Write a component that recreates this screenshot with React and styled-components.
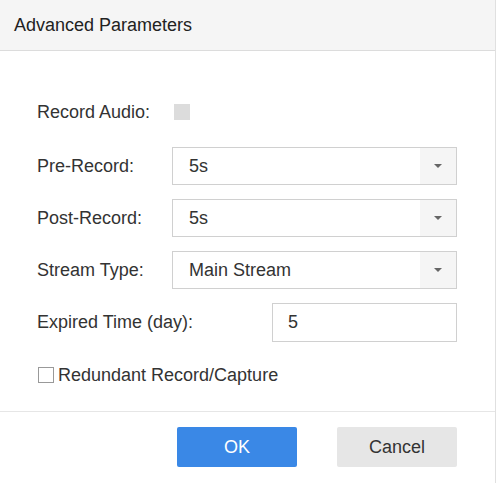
import React from 'react'
import styled, { createGlobalStyle } from 'styled-components';

const Global = createGlobalStyle`
  html, body {
    margin: 0;
    padding: 0;
    background: #fff;
  }
  body {
    font-family: "Liberation Sans", Arial, sans-serif;
  }
`

const rows = [
  { label: 'Pre-Record:', value: '5s' },
  { label: 'Post-Record:', value: '5s' },
  { label: 'Stream Type:', value: 'Main Stream' },
]

const App = () => {
  return (
    <>
      <Global />
      <Dialog>
        <Header>Advanced Parameters</Header>
        <Body>
          <Row $first>
            <Label>Record Audio:</Label>
            <GrayBox />
          </Row>
          {rows.map((r) => (
            <Row key={r.label}>
              <Label>{r.label}</Label>
              <Select>
                <SelectValue>{r.value}</SelectValue>
                <Arrow><Caret /></Arrow>
              </Select>
            </Row>
          ))}
          <Row>
            <Label $wide>Expired Time (day):</Label>
            <Input>5</Input>
          </Row>
          <CheckRow>
            <CheckBox />
            <span>Redundant Record/Capture</span>
          </CheckRow>
        </Body>
        <Footer>
          <Button $primary>OK</Button>
          <Button>Cancel</Button>
        </Footer>
      </Dialog>
    </>
  )
};

const Dialog = styled.div`
  width: 496px;
  height: 483px;
  box-sizing: border-box;
  border-right: 1px solid #e0e0e0;
  background: #fff;
  display: flex;
  flex-direction: column;
  font-size: 18px;
  color: #333;
`

const Header = styled.div`
  height: 50px;
  flex-shrink: 0;
  background: #f5f5f5;
  border-bottom: 1px solid #dcdcdc;
  display: flex;
  align-items: center;
  padding-left: 14px;
  color: #222;
`

const Body = styled.div`
  flex: 1;
  padding: 42px 0 0 37px;
  display: flex;
  flex-direction: column;
  gap: 14px;
`

const Row = styled.div`
  display: flex;
  align-items: center;
  height: 38px;
  margin-bottom: ${(p) => (p.$first ? '2px' : '0')};
`

const Label = styled.div`
  width: ${(p) => (p.$wide ? '235px' : '135px')};
  flex-shrink: 0;
`

const GrayBox = styled.div`
  width: 16px;
  height: 16px;
  margin-left: 2px;
  background: #dcdcdc;
`

const Select = styled.div`
  width: 285px;
  height: 38px;
  box-sizing: border-box;
  border: 1px solid #d0d0d0;
  display: flex;
  align-items: stretch;
`

const SelectValue = styled.div`
  flex: 1;
  display: flex;
  align-items: center;
  padding-left: 16px;
`

const Arrow = styled.div`
  width: 36px;
  background: #f5f5f5;
  display: flex;
  align-items: center;
  justify-content: center;
`

const Caret = styled.span`
  width: 0;
  height: 0;
  border-left: 4px solid transparent;
  border-right: 4px solid transparent;
  border-top: 4px solid #666;
`

const Input = styled.div`
  width: 185px;
  height: 39px;
  box-sizing: border-box;
  border: 1px solid #d0d0d0;
  display: flex;
  align-items: center;
  padding-left: 15px;
`

const CheckRow = styled.div`
  display: flex;
  align-items: center;
  gap: 4px;
  height: 16px;
  margin-top: 12px;
  margin-left: 1px;
`

const CheckBox = styled.div`
  width: 16px;
  height: 16px;
  box-sizing: border-box;
  border: 1px solid #999;
  background: #fff;
`

const Footer = styled.div`
  height: 72px;
  flex-shrink: 0;
  box-sizing: border-box;
  border-top: 1px solid #e6e6e6;
  display: flex;
  justify-content: flex-end;
  align-items: flex-start;
  gap: 40px;
  padding: 15px 38px 0 0;
`

const Button = styled.button`
  width: 120px;
  height: 40px;
  border: none;
  border-radius: 2px;
  font-family: inherit;
  font-size: 18px;
  background: ${(p) => (p.$primary ? '#3a88e6' : '#e6e6e6')};
  color: ${(p) => (p.$primary ? '#fff' : '#333')};
`

export default App
